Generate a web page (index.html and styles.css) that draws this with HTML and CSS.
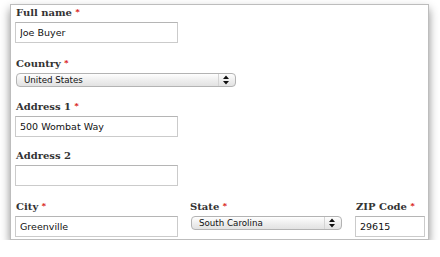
FILE: index.html
```html
<!DOCTYPE html>
<html lang="en">
<head>
    <meta charset="UTF-8">
    <meta name="viewport" content="width=device-width, initial-scale=1.0">
    <title>address form</title>
    <link rel="stylesheet" href="styles.css">
</head>
<body>
    <form class="card">
        <div class="field">
            <label class="lbl" for="fullname">Full name <em>*</em></label>
            <input type="text" id="fullname" class="txt" value="Joe Buyer">
        </div>
        <div class="field">
            <label class="lbl" for="country">Country <em>*</em></label>
            <span class="sel_box sel_country">
                <select id="country" class="sel"><option>United States</option></select>
                <svg class="arrows" width="16" height="12" viewBox="0 0 16 12"><path d="M0.5 0 V12" stroke="#d4d4d4"/><path d="M5 5 L8 1.5 L11 5 Z M5 7 L8 10.5 L11 7 Z" fill="#111"/></svg>
            </span>
        </div>
        <div class="field">
            <label class="lbl" for="addr1">Address 1 <em>*</em></label>
            <input type="text" id="addr1" class="txt" value="500 Wombat Way">
        </div>
        <div class="field">
            <label class="lbl" for="addr2">Address 2</label>
            <input type="text" id="addr2" class="txt" value="">
        </div>
        <div class="field row">
            <div class="col">
                <label class="lbl" for="city">City <em>*</em></label>
                <input type="text" id="city" class="txt" value="Greenville">
            </div>
            <div class="col">
                <label class="lbl" for="state">State <em>*</em></label>
                <span class="sel_box sel_state">
                    <select id="state" class="sel"><option>South Carolina</option></select>
                    <svg class="arrows" width="16" height="12" viewBox="0 0 16 12"><path d="M0.5 0 V12" stroke="#d4d4d4"/><path d="M5 5 L8 1.5 L11 5 Z M5 7 L8 10.5 L11 7 Z" fill="#111"/></svg>
                </span>
            </div>
            <div class="col">
                <label class="lbl" for="zip">ZIP Code <em>*</em></label>
                <input type="text" id="zip" class="txt txt_zip" value="29615">
            </div>
        </div>
    </form>
</body>
</html>
```

FILE: styles.css
```css
*{margin:0;padding:0;box-sizing:border-box;}
body{background:#fff;}
.card{display:flex;flex-direction:column;margin:4px 0 0 10px;width:419px;height:236px;padding:1px 4px 0;background:#fff;border:1px solid #bdbdbd;box-shadow:0 5px 9px rgba(0,0,0,0.45);}

.field{display:flex;flex-direction:column;margin-bottom:13px;}
.field:first-child{margin-bottom:14px;}
.field:nth-child(3){margin-bottom:12px;}
.field:nth-child(4){margin-bottom:14px;}
.lbl{display:block;height:14px;margin-bottom:2px;padding-left:1px;font:bold 10px/14px "DejaVu Serif", serif;color:#333;}
.lbl em{font-style:normal;font-size:8px;color:#d40000;vertical-align:top;line-height:11px;}

.txt{display:block;width:163px;height:21px;padding:0 4px;border:1px solid #cbcbcb;border-top-color:#b5b5b5;background:#fff;font:9.5px "DejaVu Sans", sans-serif;color:#111;outline:none;}
.txt_zip{width:70px;}

.sel_box{position:relative;display:block;height:14px;margin-left:1px;}
.sel_country{width:220px;}
.sel_state{width:151px;margin-left:2px;}
.sel{-webkit-appearance:none;appearance:none;display:block;width:100%;height:14px;padding:0 0 0 7px;border:1px solid #b3b3b3;border-radius:4px;background:linear-gradient(#fefefe,#ececec 60%,#e2e2e2);font:8.7px/12px "DejaVu Sans", sans-serif;color:#111;outline:none;}
.arrows{position:absolute;right:2px;top:1px;pointer-events:none;}

.row{display:grid;grid-template-columns:174px 166px 1fr;margin-bottom:0;}
.col{display:flex;flex-direction:column;}
```
